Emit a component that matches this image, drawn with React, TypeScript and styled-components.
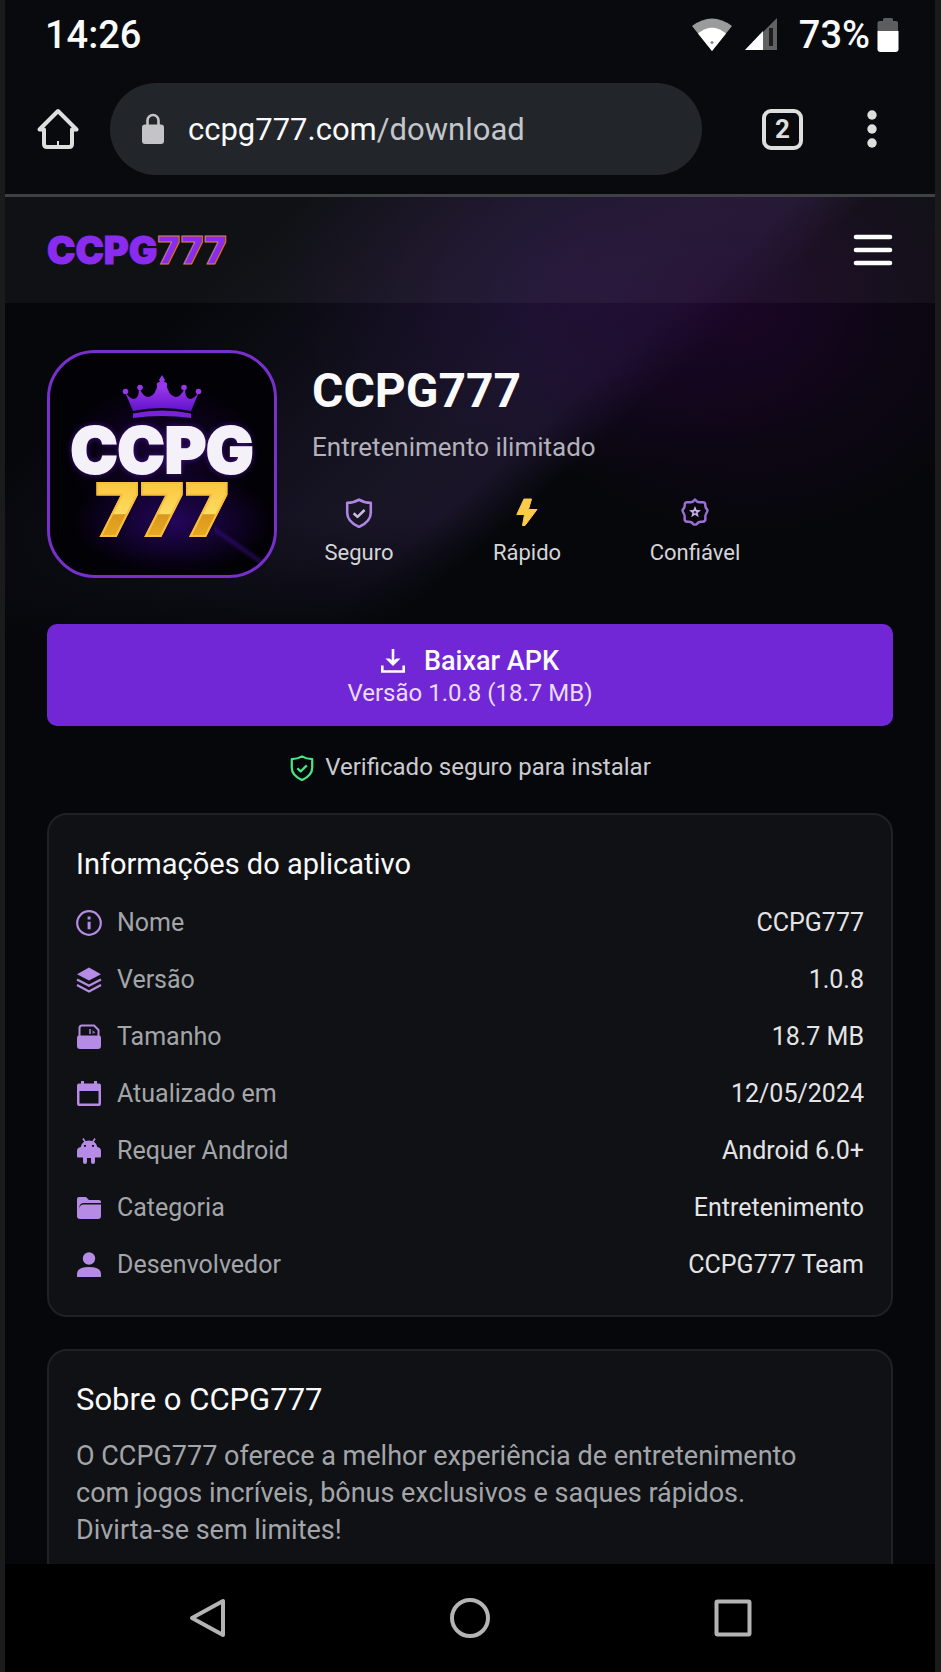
import React from 'react';
import styled, { createGlobalStyle, css } from 'styled-components';

const palette = {
  frame: '#1b1b1b',
  chrome: '#080a0d',
  page: '#06070b',
  card: '#0f1115',
  cardLine: '#1f2125',
  purple: '#7127d6',
  lilac: '#b58be6',
  white: '#fafafa',
  text: '#e4e4e6',
  muted: '#a3a5a9',
  icon: '#dedede',
  gold: '#fccb48',
  green: '#4ae683',
};

const GlobalStyle = createGlobalStyle`
  * {
    box-sizing: border-box;
  }
  body {
    margin: 0;
    background: ${palette.frame};
    color: ${palette.white};
    font-family: Roboto, 'Liberation Sans', sans-serif;
  }
  button {
    font: inherit;
    color: inherit;
    background: none;
    border: 0;
    padding: 0;
    cursor: pointer;
  }
  svg {
    display: block;
    flex: none;
  }
`;

const HomeIcon = () => (
  <svg width="42" height="42" viewBox="0 0 42 42" fill="none" stroke={palette.icon} strokeWidth="4">
    <path d="M2.500 21.500 21 3l18.500 18.500H35V36q0 3-3 3H10q-3 0-3-3V21.500z" strokeLinejoin="round" />
    <path d="M21 33v5" strokeWidth="2" />
  </svg>
);

const LockIcon = () => (
  <svg width="24" height="32" viewBox="0 0 24 32">
    <path d="M6.500 13V7.500a5.500 5.500 0 0 1 11 0V13" fill="none" stroke="#c4c4c8" strokeWidth="2.600" />
    <rect x="1" y="11.500" width="22" height="19.500" rx="3" fill="#c4c4c8" />
  </svg>
);

const WifiIcon = () => (
  <svg width="40" height="34" viewBox="0 0 40 34">
    <path d="M20 33 0 8Q20-7 40 8Z" fill="#9b9b9b" />
    <path d="M20 33 6 15.500Q20 4 34 15.500Z" fill="#fff" />
    <circle cx="20" cy="24.500" r="1.500" fill="#888" />
  </svg>
);

const SignalIcon = () => (
  <svg width="32" height="33" viewBox="0 0 32 33">
    <path d="M0 32 32 0v32z" fill="#626262" />
    <path d="M0 32 18 13v19z" fill="#fff" />
    <path d="M26 10v18" stroke="#1d1d1d" strokeWidth="4" />
  </svg>
);

const BatteryIcon = () => (
  <svg width="22" height="34" viewBox="0 0 22 34">
    <path d="M6 3V1.500Q6 0 7.500 0h7Q16 0 16 1.500V3h3q2 0 2 2v8H.500V5q0-2 2-2z" fill="#5d5d5f" />
    <path d="M.500 13h21v18q0 3-3 3h-15q-3 0-3-3z" fill="#fff" />
  </svg>
);

const DotsIcon = () => (
  <svg width="10" height="38" viewBox="0 0 10 38" fill={palette.icon}>
    <circle cx="5" cy="5" r="4.700" />
    <circle cx="5" cy="19" r="4.700" />
    <circle cx="5" cy="33" r="4.700" />
  </svg>
);

const MenuIcon = () => (
  <svg width="40" height="32" viewBox="0 0 40 32" stroke="#fff" strokeWidth="4.600" strokeLinecap="round">
    <path d="M3 3h34M3 16h34M3 29h34" />
  </svg>
);

const CrownIcon = () => (
  <svg width="80" height="44" viewBox="0 0 80 44">
    <defs>
      <linearGradient id="crown" x1="0" y1="0" x2="0" y2="1">
        <stop offset="0" stopColor="#a23ef0" />
        <stop offset="1" stopColor="#6212cc" />
      </linearGradient>
    </defs>
    <path
      fill="url(#crown)"
      d="M11 36 3 17q5 7 9 7 5 0 5-11 5 10 10 9 7-2 9-14h8q2 12 9 14 5 1 10-9 0 11 5 11 4 0 9-7l-8 19Q40 30 11 36z"
    />
    <path fill="#7a22d8" d="M11 38.500q29-6 58 0V43q-29-4-58 0z" />
    <g fill="#9638ea">
      <circle cx="3.500" cy="16.500" r="2.800" />
      <circle cx="18" cy="12.500" r="2.800" />
      <circle cx="62" cy="12.500" r="2.800" />
      <circle cx="76.500" cy="16.500" r="2.800" />
      <path d="m40 0 3 5-1 2q4 0 3 4H35q-1-4 3-4l-1-2z" />
    </g>
  </svg>
);

const ShieldIcon = ({ size, color, mark }: { size: number; color: string; mark: string }) => (
  <svg width={size} height={size} viewBox="0 0 28 28" fill="none" strokeLinejoin="round">
    <path
      d="M14 1.500c3.500 2.200 7 2.900 11 3v9.200c0 6-4.500 10.300-11 13.300-6.500-3-11-7.300-11-13.300V4.500c4-.1 7.500-.8 11-3z"
      stroke={color}
      strokeWidth="2.400"
    />
    <path d="m9 14.200 3.600 3.400 6.600-6.400" stroke={mark} strokeWidth="2.400" />
  </svg>
);

const BoltIcon = () => (
  <svg width="28" height="28" viewBox="0 0 28 28">
    <path
      d="M11 1h7.500L15.500 11.500H24L12 27.500H9.500l2-11H3.800z"
      fill={palette.gold}
      stroke={palette.gold}
      strokeLinejoin="round"
    />
  </svg>
);

const BadgeIcon = () => (
  <svg width="28" height="28" viewBox="0 0 28 28" fill="none" strokeLinejoin="round">
    <path
      d="M14 1.500q2 2.800 4.500 2.700h3.300q2.500 0 2.500 2.500-.3 3.300 2.200 5.300 0 2-1.300 3.500-1.200 2-.8 5 .2 3-2.800 3.300-4.600-.6-5.600 2.200-2 1.300-4 0-1-2.800-5.600-2.200-3-.3-2.800-3.300.4-3-.8-5Q1.500 14 1.500 12 4 10 3.700 6.700q0-2.500 2.500-2.500h3.300Q12 4.300 14 1.500z"
      stroke="#9c6fd8"
      strokeWidth="2.400"
    />
    <path
      d="m14 8 1.700 4.100 4.300.2-3.400 2.700 1.200 4.200-3.800-2.400-3.800 2.400 1.200-4.200L8 12.300l4.300-.2z"
      fill="#c9b4e8"
    />
    <circle cx="14" cy="14.300" r="1.300" fill="#3a2a55" />
  </svg>
);

const DownloadIcon = () => (
  <svg width="24" height="24" viewBox="0 0 24 24" fill="none" stroke="#fff" strokeWidth="2.600">
    <path d="M12 0v14" />
    <path d="M1.300 16.500v6h21.400v-6" />
    <path d="M4.500 9.500h4l3.500 2.600 3.500-2.600h4L12 17z" fill="#fff" stroke="none" />
  </svg>
);

const RowIcon = ({ children }: { children: React.ReactNode }) => (
  <svg width="26" height="26" viewBox="0 0 26 26" fill={palette.lilac}>
    {children}
  </svg>
);

const info = [
  {
    label: 'Nome',
    value: 'CCPG777',
    icon: (
      <>
        <circle cx="13" cy="13" r="11.800" fill="none" stroke={palette.lilac} strokeWidth="2.200" />
        <path d="M11.600 6.500h3v3h-3zM11.600 11.800h3v7.400h-3z" />
      </>
    ),
  },
  {
    label: 'Versão',
    value: '1.0.8',
    icon: (
      <>
        <path d="m13 .500 12 6.800-12 6.200L1 7.300z" />
        <path
          d="m1 12.500 12 6.200 12-6.200M1 18l12 6.500L25 18"
          fill="none"
          stroke={palette.lilac}
          strokeWidth="2.300"
        />
      </>
    ),
  },
  {
    label: 'Tamanho',
    value: '18.7 MB',
    icon: (
      <>
        <path
          d="M3.500 13V4q0-2.500 2.500-2.500h12L22.500 6v7"
          fill="none"
          stroke={palette.lilac}
          strokeWidth="2"
        />
        <path d="M13 5h2v5h-2zM16.500 6l3 2.500-3 1.500z" opacity=".7" />
        <path d="M3 11.500h20q2 0 2 2V22q0 3-3 3H4q-3 0-3-3v-8.500q0-2 2-2z" />
      </>
    ),
  },
  {
    label: 'Atualizado em',
    value: '12/05/2024',
    icon: (
      <path
        fillRule="evenodd"
        d="M5 0h3v2.500h10V0h3v2.500h2q2 0 2 2V23q0 2-2 2H3q-2 0-2-2V4.500q0-2 2-2h2zM3.500 10v12.500h19V10z"
      />
    ),
  },
  {
    label: 'Requer Android',
    value: 'Android 6.0+',
    icon: (
      <>
        <path
          fillRule="evenodd"
          d="M13 2.500q7 0 8.300 6.500Q25 9.500 25 13v5.500q0 1-1 1h-5V24q0 2-2 2t-2-2v-4h-4v4q0 2-2 2t-2-2v-4.500H2q-1 0-1-1V13q0-3.500 3.700-4Q6 2.500 13 2.500zM8 7v1.800h2V7zm8 0v1.800h2V7z"
        />
        <path d="m7 .500 2.500 4M19 .500l-2.500 4" stroke={palette.lilac} strokeWidth="1.600" />
      </>
    ),
  },
  {
    label: 'Categoria',
    value: 'Entretenimento',
    icon: (
      <>
        <path d="M3 2h7l3 3h10q2 0 2 2v1H8Q4.500 8 3.500 11L3 22q-2 0-2-2V4q0-2 2-2z" />
        <path d="M7 9.500h18V21q0 3-3 3H4q-3 0-3-3l2.500-9q1-2.500 3.500-2.500z" />
      </>
    ),
  },
  {
    label: 'Desenvolvedor',
    value: 'CCPG777 Team',
    icon: (
      <>
        <circle cx="13" cy="6.500" r="6.200" />
        <path d="M1 25v-3q0-7 12-7t12 7v3z" />
      </>
    ),
  },
];

const App: React.FC = () => (
  <>
    <GlobalStyle />
    <Screen>
      <StatusBar>
        <span>14:26</span>
        <StatusIcons>
          <WifiIcon />
          <SignalIcon />
          <Battery>
            73%
            <BatteryIcon />
          </Battery>
        </StatusIcons>
      </StatusBar>

      <BrowserBar>
        <button aria-label="Página inicial">
          <HomeIcon />
        </button>
        <AddressBar>
          <LockIcon />
          <span>
            ccpg777.com<Path>/download</Path>
          </span>
        </AddressBar>
        <TabsButton aria-label="Abas">2</TabsButton>
        <MoreButton aria-label="Mais opções">
          <DotsIcon />
        </MoreButton>
      </BrowserBar>

      <Page>
        <SiteHeader>
          <Logo href="#">
            CCPG<LogoSevens>777</LogoSevens>
          </Logo>
          <button aria-label="Menu">
            <MenuIcon />
          </button>
        </SiteHeader>

        <Content>
          <Hero>
            <AppIcon>
              <CrownIcon />
              <AppIconName>CCPG</AppIconName>
              <AppIconSevens>777</AppIconSevens>
            </AppIcon>
            <div>
              <Title>CCPG777</Title>
              <Tagline>Entretenimento ilimitado</Tagline>
              <Features>
                <Feature>
                  <ShieldIcon size={30} color="#b085e6" mark="#cbbbe0" />
                  Seguro
                </Feature>
                <Feature>
                  <BoltIcon />
                  Rápido
                </Feature>
                <Feature>
                  <BadgeIcon />
                  Confiável
                </Feature>
              </Features>
            </div>
          </Hero>

          <DownloadButton>
            <DownloadLabel>
              <DownloadIcon />
              Baixar APK
            </DownloadLabel>
            <DownloadVersion>Versão 1.0.8 (18.7 MB)</DownloadVersion>
          </DownloadButton>

          <Verified>
            <ShieldIcon size={26} color={palette.green} mark={palette.green} />
            Verificado seguro para instalar
          </Verified>

          <Card>
            <CardTitle $size={29}>Informações do aplicativo</CardTitle>
            <InfoTable>
              <tbody>
                {info.map(({ label, value, icon }) => (
                  <tr key={label}>
                    <InfoLabel scope="row">
                      <InfoName>
                        <RowIcon>{icon}</RowIcon>
                        {label}
                      </InfoName>
                    </InfoLabel>
                    <InfoValue>{value}</InfoValue>
                  </tr>
                ))}
              </tbody>
            </InfoTable>
          </Card>

          <Card>
            <CardTitle $size={31}>Sobre o CCPG777</CardTitle>
            <About>
              O CCPG777 oferece a melhor experiência de entretenimento com jogos
              incríveis, bônus exclusivos e saques rápidos. Divirta-se sem
              limites!
            </About>
          </Card>
        </Content>
      </Page>

      <NavBar>
        <button aria-label="Voltar">
          <NavIcon viewBox="0 0 40 40">
            <path d="M36 3v34L5 20z" />
          </NavIcon>
        </button>
        <button aria-label="Início">
          <NavIcon viewBox="0 0 40 40">
            <circle cx="20" cy="20" r="18" />
          </NavIcon>
        </button>
        <button aria-label="Recentes">
          <NavIcon viewBox="0 0 40 40">
            <rect x="3.500" y="3.500" width="33" height="33" rx="1" />
          </NavIcon>
        </button>
      </NavBar>
    </Screen>
  </>
);

const Screen = styled.div`
  height: 100vh;
  margin: 0 6px 0 5px;
  display: flex;
  flex-direction: column;
  background: ${palette.chrome};
`;

const StatusBar = styled.div`
  flex: none;
  height: 69px;
  padding: 0 36px 0 40px;
  display: flex;
  align-items: center;
  justify-content: space-between;
  font-size: 38px;
  font-weight: 500;
`;

const StatusIcons = styled.div`
  display: flex;
  align-items: center;
  gap: 13px;
`;

const Battery = styled.span`
  display: flex;
  align-items: center;
  gap: 7px;
  margin-left: 9px;
`;

const BrowserBar = styled.div`
  flex: none;
  display: flex;
  align-items: center;
  padding: 14px 58px 19px 32px;
  border-bottom: 3px solid #3f4043;
`;

const AddressBar = styled.div`
  flex: 1;
  height: 92px;
  margin: 0 60px 0 31px;
  padding-left: 31px;
  display: flex;
  align-items: center;
  gap: 23px;
  border-radius: 46px;
  background: #22252a;
  font-size: 31px;
`;

const Path = styled.span`
  color: #c3c6cb;
`;

const TabsButton = styled.button`
  && {
    width: 41px;
    height: 41px;
    border: 4px solid ${palette.icon};
    border-radius: 9px;
    color: ${palette.icon};
    font-size: 26px;
    font-weight: 700;
    line-height: 33px;
  }
`;

const MoreButton = styled.button`
  && {
    margin-left: 64px;
  }
`;

const Page = styled.main`
  flex: 1;
  min-height: 0;
  overflow: hidden;
  background:
    radial-gradient(ellipse 260px 220px at 80% 120px, #22042e99, transparent),
    radial-gradient(ellipse 300px 200px at 62% 80px, #2c0f5466, transparent),
    linear-gradient(transparent 320px, ${palette.page} 440px) no-repeat 0 0 / 100% 440px,
    linear-gradient(138deg, transparent 200px, #181525 470px, #191428 530px, transparent 580px)
      no-repeat 0 0 / 100% 440px,
    ${palette.page};
`;

const SiteHeader = styled.header`
  height: 106px;
  padding: 0 42px;
  display: flex;
  align-items: center;
  justify-content: space-between;
  background: #ffffff0b;
`;

const heavy = css`
  font-family: Inter, 'Liberation Sans', sans-serif;
  font-weight: 900;
`;

const Logo = styled.a`
  ${heavy}
  display: flex;
  align-items: center;
  font-size: 38px;
  line-height: 1;
  color: #8a2bf0;
  text-decoration: none;
  -webkit-text-stroke: 1px #8a2bf0;
`;

const LogoSevens = styled.span`
  -webkit-text-stroke: 1px #d9823c;
`;

const Content = styled.div`
  padding: 47px 42px 0;
`;

const Hero = styled.section`
  display: flex;
  gap: 35px;
`;

const AppIcon = styled.div`
  flex: none;
  width: 230px;
  height: 228px;
  padding-top: 22px;
  display: flex;
  flex-direction: column;
  align-items: center;
  border: 3px solid #7730cc;
  border-radius: 48px;
  background:
    linear-gradient(35deg, transparent 44%, #3a0e8880 50%, transparent 56%) no-repeat 100% 100% / 60px 50px,
    radial-gradient(ellipse 100px 50px at 55% 76%, #24055c, transparent),
    radial-gradient(ellipse 100px 70px at 50% 45%, #160332, transparent),
    #020106;
`;

const AppIconName = styled.span`
  ${heavy}
  font-size: 63px;
  line-height: 62px;
  color: #f4f2f8;
  text-shadow: 0 0 6px #5a1ab0;
  -webkit-text-stroke: 2px #f4f2f8;
`;

const AppIconSevens = styled.span`
  ${heavy}
  font-size: 73px;
  line-height: 58px;
  color: transparent;
  background: linear-gradient(#fbc53a, #fddc62 57%, #d9981c 58%, #e9ab24);
  background-clip: text;
  -webkit-text-stroke: 2px #f9bf3c;
`;

const Title = styled.h1`
  margin: 15px 0 0;
  font-size: 48px;
  font-weight: 700;
  line-height: 52px;
`;

const Tagline = styled.p`
  margin: 14px 0 0;
  font-size: 26px;
  line-height: 32px;
  color: #b4b1bb;
`;

const Features = styled.div`
  display: grid;
  grid-template-columns: repeat(3, 168px);
  margin: 35px 0 0 -37px;
`;

const Feature = styled.div`
  display: flex;
  flex-direction: column;
  align-items: center;
  justify-content: space-between;
  height: 69px;
  font-size: 22px;
  line-height: 28px;
  color: #d5d4d8;
`;

const DownloadButton = styled.button`
  && {
    display: flex;
    flex-direction: column;
    align-items: center;
    width: 100%;
    margin-top: 46px;
    padding: 20px 0 18px;
    border-radius: 10px;
    background: ${palette.purple};
  }
`;

const DownloadLabel = styled.span`
  display: flex;
  align-items: center;
  gap: 19px;
  font-size: 27px;
  font-weight: 500;
  line-height: 34px;
`;

const DownloadVersion = styled.span`
  font-size: 24px;
  line-height: 30px;
  color: #e9dcfb;
`;

const Verified = styled.p`
  margin: 26px 0 30px;
  display: flex;
  align-items: center;
  justify-content: center;
  gap: 10px;
  font-size: 24px;
  line-height: 31px;
  color: #cbcbcf;
`;

const Card = styled.section`
  padding: 31px 27px 22px;
  border: 2px solid ${palette.cardLine};
  border-radius: 20px;
  background: ${palette.card};

  & + & {
    margin-top: 32px;
  }
`;

const CardTitle = styled.h2<{ $size: number }>`
  margin: 0;
  font-size: ${(props) => props.$size}px;
  font-weight: 400;
  line-height: 36px;
`;

const InfoTable = styled.table`
  width: 100%;
  margin-top: 12px;
  border-collapse: collapse;
  font-size: 25px;

  td,
  th {
    height: 57px;
    padding: 0;
  }
`;

const InfoLabel = styled.th`
  font-weight: 400;
  color: ${palette.muted};
`;

const InfoName = styled.span`
  display: flex;
  align-items: center;
  gap: 15px;
`;

const InfoValue = styled.td`
  text-align: right;
  color: ${palette.text};
`;

const About = styled.p`
  max-width: 740px;
  margin: 20px 0 32px;
  font-size: 27px;
  line-height: 37px;
  color: ${palette.muted};
`;

const NavBar = styled.nav`
  flex: none;
  height: 108px;
  padding: 0 182px;
  display: flex;
  align-items: center;
  justify-content: space-between;
  background: #000;
`;

const NavIcon = styled.svg`
  width: 40px;
  height: 40px;
  fill: none;
  stroke: #b4b4b4;
  stroke-width: 4px;
  stroke-linejoin: round;
`;

export default App;
